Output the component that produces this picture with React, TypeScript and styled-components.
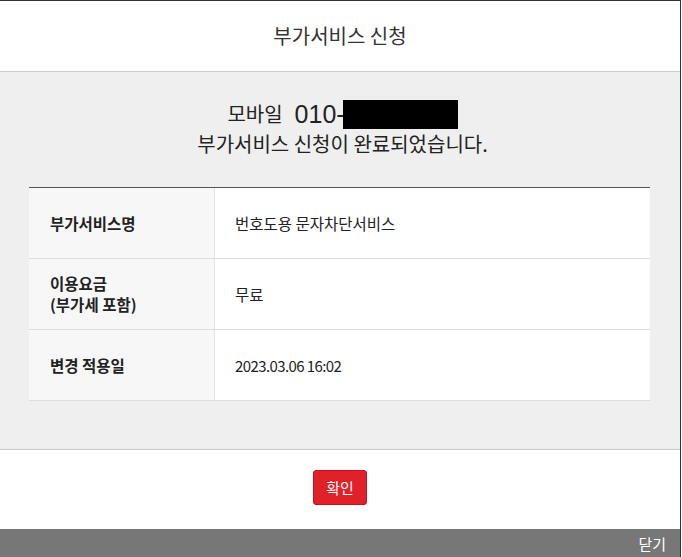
import React from "react";
import styled, { createGlobalStyle } from "styled-components";

const Global = createGlobalStyle`
  html, body { margin: 0; padding: 0; background: #ffffff; }
  body { font-family: "Noto Sans CJK KR", "Noto Sans", sans-serif; color: #222; }
  * { box-sizing: border-box; }
`;

const Frame = styled.div`
  width: 681px;
  height: 557px;
  border-top: 1px solid #333;
  border-right: 1px solid #333;
  display: flex;
  flex-direction: column;
  background: #fff;
  overflow: hidden;
`;

const Header = styled.header`
  height: 71px;
  flex: none;
  display: flex;
  align-items: center;
  justify-content: center;
  border-bottom: 1px solid #cccccc;
  font-size: 20px;
  color: #333;
  padding-bottom: 2px;
`;

const Body = styled.section`
  height: 378px;
  flex: none;
  background: #efefef;
  border-bottom: 1px solid #cccccc;
  padding: 26px 30px 0 29px;
`;

const Message = styled.div`
  display: flex;
  flex-direction: column;
  align-items: center;
  color: #222;
  font-size: 20px;
  line-height: 28px;
  padding-left: 6px;
`;

const PhoneLine = styled.div`
  display: flex;
  align-items: center;
  height: 32px;
  line-height: 32px;
`;

const Label = styled.span`
  font-size: 20px;
  margin-right: 12px;
`;

const Number = styled.span`
  font-size: 25px;
  font-family: "Liberation Sans", "Noto Sans", sans-serif;
`;

const Mask = styled.span`
  display: inline-block;
  width: 115px;
  height: 29px;
  background: #000;
  margin-left: -2px;
`;

const Done = styled.div`
  height: 28px;
`;

const Table = styled.div`
  margin-top: 29px;
  border-top: 1px solid #555;
  background: #fff;
`;

const Row = styled.div`
  display: grid;
  grid-template-columns: 186px 1fr;
  height: 71px;
  border-bottom: 1px solid #dddddd;
`;

const Th = styled.div`
  background: #f7f7f7;
  border-right: 1px solid #e4e4e4;
  padding-left: 21px;
  display: flex;
  flex-direction: column;
  justify-content: center;
  font-size: 15.5px;
  font-weight: 700;
  line-height: 21px;
  color: #222;
`;

const Td = styled.div<{ $mono?: boolean }>`
  padding-left: 20px;
  display: flex;
  align-items: center;
  font-size: ${(p) => (p.$mono ? "15px" : "15.5px")};
  color: #222;
  letter-spacing: ${(p) => (p.$mono ? "-0.6px" : "0")};
`;

const Footer = styled.footer`
  height: 79px;
  flex: none;
  display: flex;
  justify-content: center;
  padding-top: 20px;
`;

const ConfirmButton = styled.button`
  width: 54px;
  height: 35px;
  background: #e0212a;
  border: 1px solid #c8121b;
  border-radius: 3px;
  color: #fff;
  font-family: "Noto Sans CJK KR", sans-serif;
  font-size: 15px;
  padding: 0;
  cursor: pointer;
`;

const CloseBar = styled.div`
  flex: 1;
  background: #777777;
  display: flex;
  align-items: center;
  justify-content: flex-end;
  padding-right: 14px;
  color: #fff;
  font-size: 15px;
`;

const rows = [
  { th: ["부가서비스명"], td: "번호도용 문자차단서비스" },
  { th: ["이용요금", "(부가세 포함)"], td: "무료" },
  { th: ["변경 적용일"], td: "2023.03.06 16:02", mono: true },
];

export default function App() {
  return (
    <>
      <Global />
      <Frame>
        <Header>부가서비스 신청</Header>
        <Body>
          <Message>
            <PhoneLine>
              <Label>모바일</Label>
              <Number>010-</Number>
              <Mask />
            </PhoneLine>
            <Done>부가서비스 신청이 완료되었습니다.</Done>
          </Message>
          <Table>
            {rows.map((r) => (
              <Row key={r.td}>
                <Th>
                  {r.th.map((t) => (
                    <span key={t}>{t}</span>
                  ))}
                </Th>
                <Td $mono={r.mono}>{r.td}</Td>
              </Row>
            ))}
          </Table>
        </Body>
        <Footer>
          <ConfirmButton>확인</ConfirmButton>
        </Footer>
        <CloseBar>닫기</CloseBar>
      </Frame>
    </>
  );
}
